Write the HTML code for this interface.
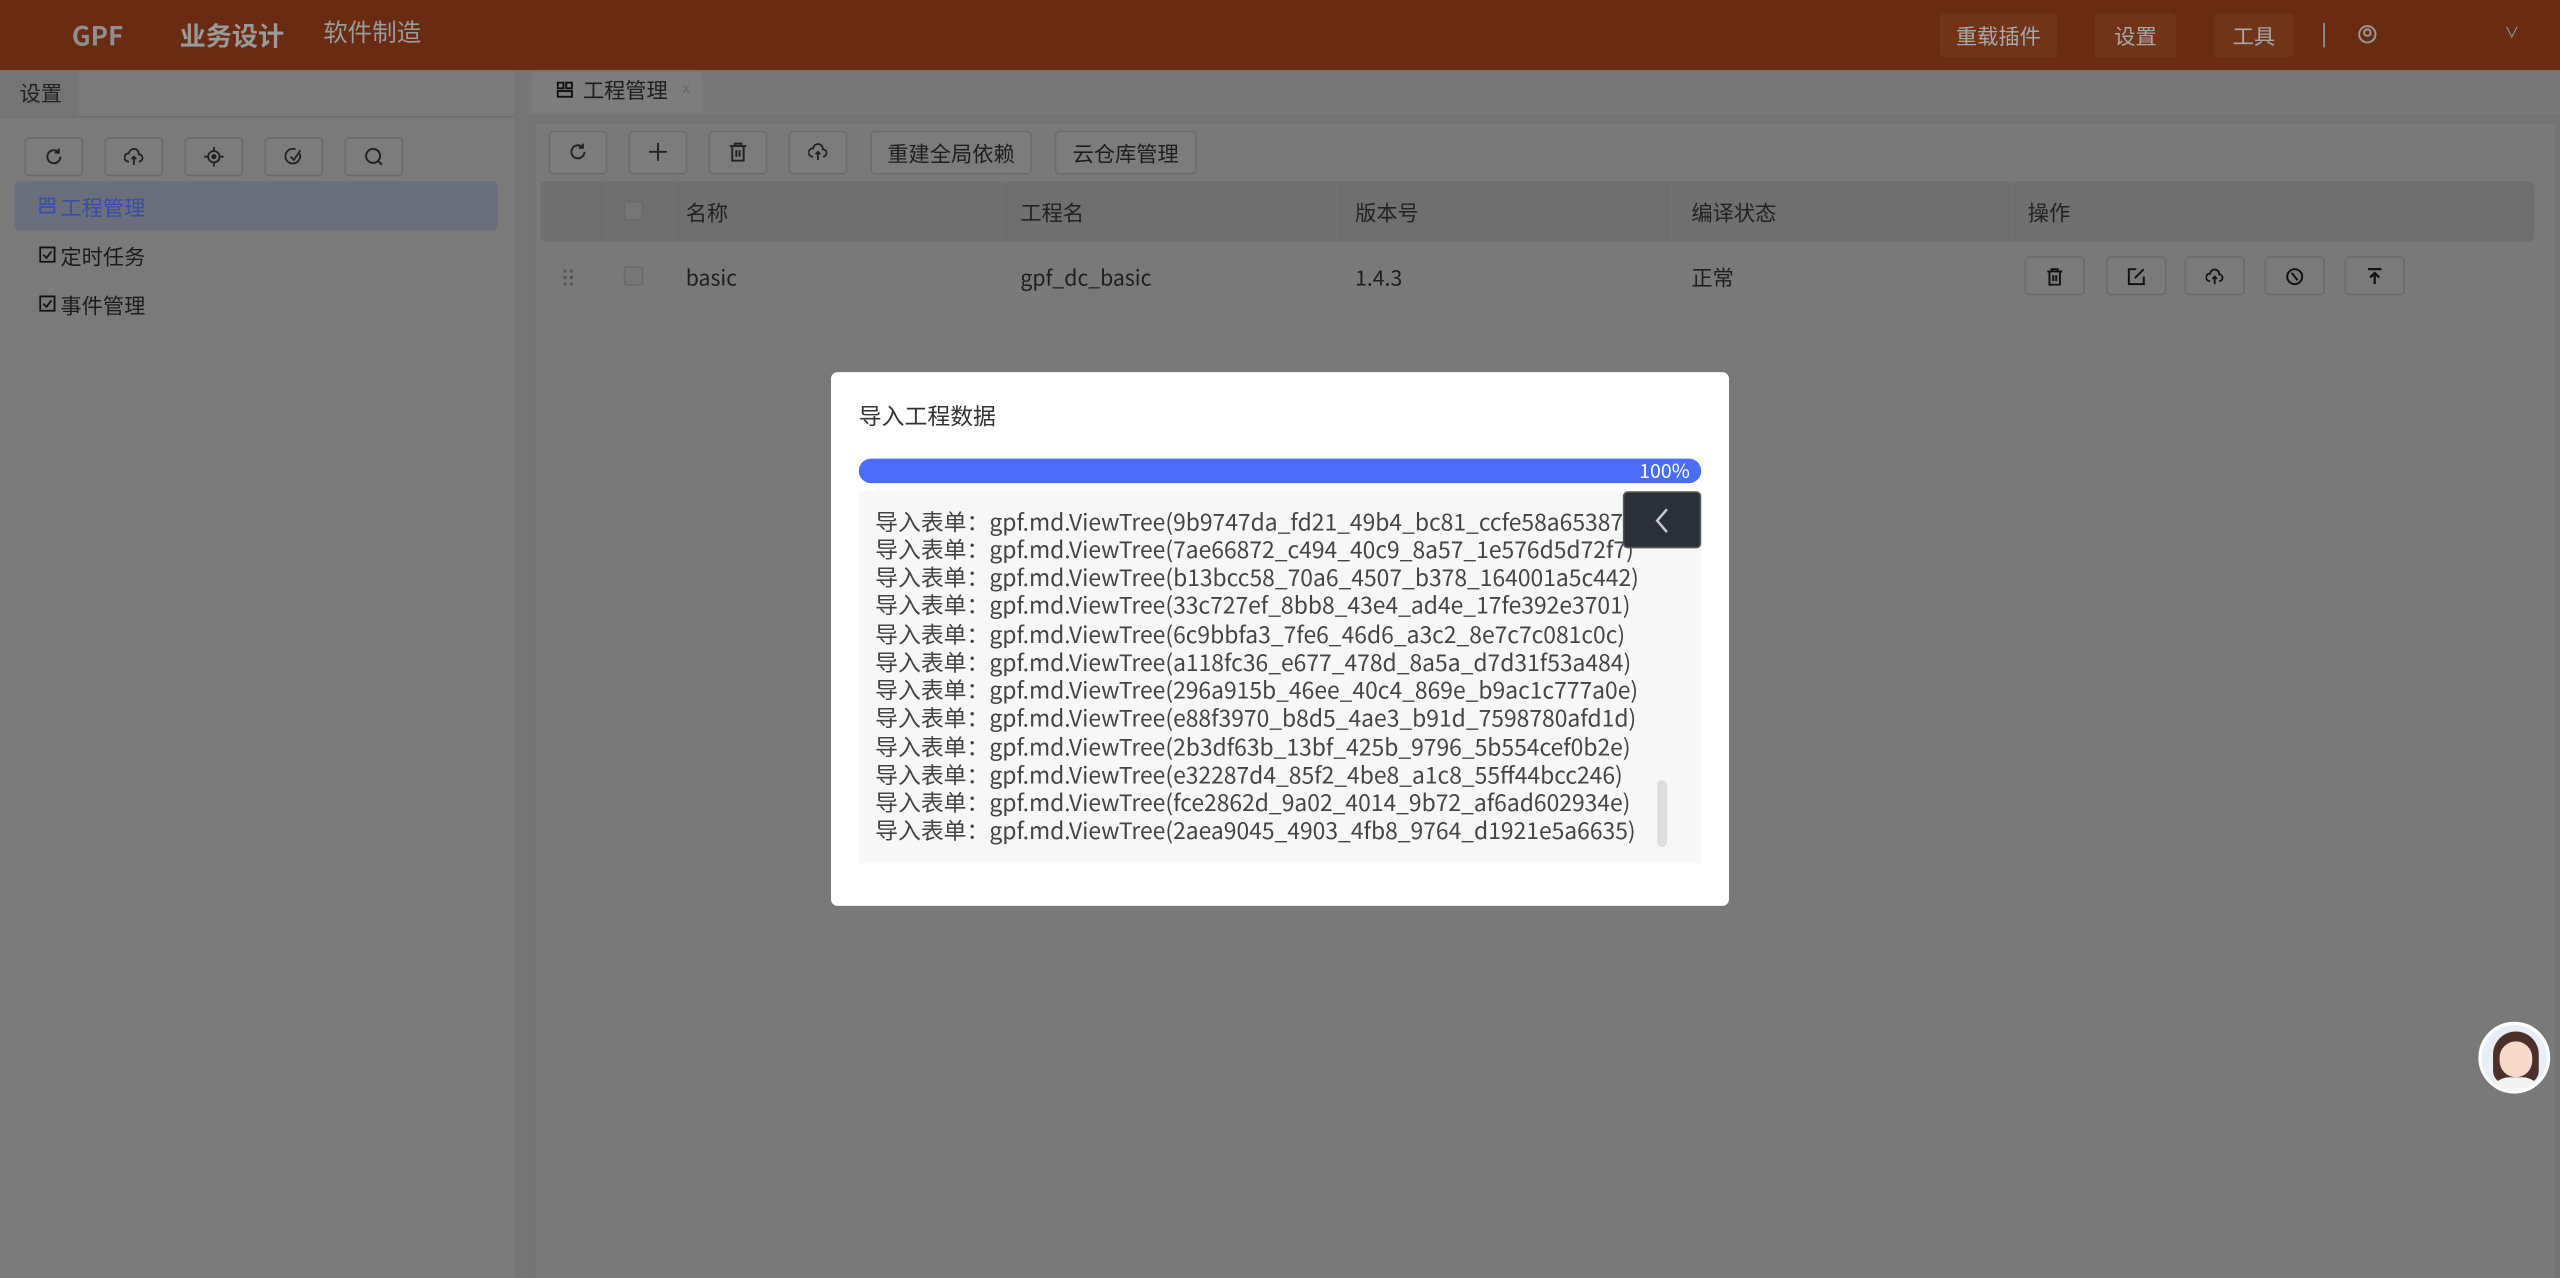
<!DOCTYPE html>
<html><head><meta charset="utf-8"><style>
*{margin:0;padding:0;box-sizing:border-box}
html,body{width:2560px;height:1278px;overflow:hidden;background:#777}
#s{width:1568px;height:783px;transform:scale(1.63265,1.6322);transform-origin:0 0;position:relative;font-family:"Noto Sans CJK SC","Liberation Sans",sans-serif;background:#787878;color:#222}
.a{position:absolute}
.hb{position:absolute;top:8px;height:27px;background:#703419;border-radius:3px;color:#a9a9a9;font-size:13px;line-height:27px;text-align:center}
.ib{position:absolute;top:84px;width:36px;height:24px;border:1px solid #6a6a6a;border-radius:3px;background:#7c7c7c}
.tb{position:absolute;top:80px;height:27px;border:1px solid #6c6c6c;border-radius:3px;background:#7c7c7c;font-size:13px;line-height:25px;text-align:center;color:#1e1e1e}
.ab{position:absolute;top:157px;width:37px;height:24px;border:1px solid #6a6a6a;border-radius:3px;background:#7a7a7a}
.ln{position:absolute;left:536px;font-size:14px;letter-spacing:0;line-height:17px;color:#444;white-space:nowrap;font-family:"Noto Sans CJK SC",sans-serif}
svg{position:absolute}
</style></head><body><div id="s">
<div class="a" style="left:0;top:0;width:1568px;height:43px;background:#692b11"></div>
<div class="a" style="left:44px;top:10px;font-size:16px;font-weight:bold;color:#8f8f8f;line-height:22px">GPF</div>
<div class="a" style="left:110px;top:10px;font-size:16px;font-weight:bold;color:#9a9a9a;line-height:22px">业务设计</div>
<div class="a" style="left:198px;top:9px;font-size:15px;color:#9a9a9a;line-height:22px">软件制造</div>
<div class="hb" style="left:1188px;width:72px">重载插件</div>
<div class="hb" style="left:1283px;width:50px">设置</div>
<div class="hb" style="left:1356px;width:49px">工具</div>
<div class="a" style="left:1423px;top:14px;width:1px;height:15px;background:#999"></div>
<svg style="left:1444px;top:15px" width="12" height="12" viewBox="0 0 12 12" fill="none" stroke="#999" stroke-width="1.2"><circle cx="6" cy="6" r="5"/><circle cx="6" cy="5" r="2"/></svg>
<div class="a" style="left:1534px;top:13px;font-size:9px;color:#999">∨</div>
<div class="a" style="left:0;top:43px;width:315px;height:740px;background:#7a7a7a"></div>
<div class="a" style="left:0;top:43px;width:48px;height:28px;background:#747474;font-size:13px;line-height:28px;padding-left:12px;color:#222">设置</div>
<div class="a" style="left:0;top:71px;width:315px;height:1px;background:#6e6e6e"></div>
<div class="ib" style="left:15px"></div><div class="ib" style="left:64px"></div><div class="ib" style="left:113px"></div><div class="ib" style="left:162px"></div><div class="ib" style="left:211px"></div>
<svg style="left:27px;top:90px" width="12" height="12" viewBox="0 0 12 12" fill="none" stroke="#222" stroke-width="1.2"><path d="M10 6a4 4 0 1 1-1.5-3.1M9 1v2.5H6.5"/></svg>
<svg style="left:76px;top:90px" width="12" height="12" viewBox="0 0 12 12" fill="none" stroke="#222" stroke-width="1.1"><path d="M3 9H2.5a2.5 2.5 0 0 1 .5-5 3 3 0 0 1 6 .5 2 2 0 0 1 0 4.5H9M6 11V6M4.5 7.5 6 6l1.5 1.5"/></svg>
<svg style="left:125px;top:90px" width="12" height="12" viewBox="0 0 12 12" fill="none" stroke="#222" stroke-width="1.1"><circle cx="6" cy="6" r="3.5"/><circle cx="6" cy="6" r="1" fill="#222"/><path d="M6 0v2.5M6 9.5V12M0 6h2.5M9.5 6H12"/></svg>
<svg style="left:174px;top:90px" width="12" height="12" viewBox="0 0 12 12" fill="none" stroke="#222" stroke-width="1.1"><path d="M9.5 4A4.5 4.5 0 1 1 7 1.5M4 6l2 2 4-6"/></svg>
<svg style="left:223px;top:90px" width="12" height="12" viewBox="0 0 12 12" fill="none" stroke="#222" stroke-width="1.2"><circle cx="5.5" cy="5.5" r="4.3"/><path d="M8.5 8.5 11 11"/></svg>
<div class="a" style="left:9px;top:111px;width:296px;height:30px;background:#6b6f7b;border-radius:3px"></div>
<svg style="left:24px;top:121px" width="10" height="10" viewBox="0 0 10 10" fill="none" stroke="#3d4fa8" stroke-width="1.2"><rect x="0.6" y="0.6" width="3.5" height="3.5"/><rect x="5.8" y="0.6" width="3.5" height="3.5"/><rect x="0.6" y="5.8" width="8.7" height="3.5"/></svg>
<div class="a" style="left:37px;top:117px;font-size:13px;color:#3a4ca6">工程管理</div>
<svg style="left:24px;top:151px" width="10" height="10" viewBox="0 0 10 10" fill="none" stroke="#111" stroke-width="1.1"><rect x="0.6" y="0.6" width="8.8" height="8.8"/><path d="M2.5 5l2 2 3-4"/></svg>
<div class="a" style="left:37px;top:147px;font-size:13px;color:#1c1c1c">定时任务</div>
<svg style="left:24px;top:181px" width="10" height="10" viewBox="0 0 10 10" fill="none" stroke="#111" stroke-width="1.1"><rect x="0.6" y="0.6" width="8.8" height="8.8"/><path d="M2.5 5l2 2 3-4"/></svg>
<div class="a" style="left:37px;top:177px;font-size:13px;color:#1c1c1c">事件管理</div>
<div class="a" style="left:315px;top:43px;width:8px;height:740px;background:#747474"></div>
<div class="a" style="left:323px;top:43px;width:1245px;height:27px;background:#777"></div>
<div class="a" style="left:326px;top:44px;width:104px;height:25px;background:#7d7d7d;border-radius:3px 3px 0 0"></div>
<svg style="left:341px;top:50px" width="10" height="10" viewBox="0 0 10 10" fill="none" stroke="#111" stroke-width="1.2"><rect x="0.6" y="0.6" width="3.5" height="3.5"/><rect x="5.8" y="0.6" width="3.5" height="3.5"/><rect x="0.6" y="5.8" width="8.7" height="3.5"/></svg>
<div class="a" style="left:357px;top:45px;font-size:13px;color:#1e1e1e">工程管理</div>
<div class="a" style="left:418px;top:47px;font-size:9px;color:#666">x</div>
<div class="a" style="left:323px;top:70px;width:1245px;height:713px;background:#737373"></div>
<div class="a" style="left:328px;top:76px;width:1237px;height:707px;background:#797979"></div>
<div class="tb" style="left:336px;width:36px"></div><div class="tb" style="left:385px;width:36px"></div><div class="tb" style="left:434px;width:36px"></div><div class="tb" style="left:483px;width:36px"></div>
<svg style="left:348px;top:87px" width="12" height="12" viewBox="0 0 12 12" fill="none" stroke="#222" stroke-width="1.2"><path d="M10 6a4 4 0 1 1-1.5-3.1M9 1v2.5H6.5"/></svg>
<svg style="left:397px;top:87px" width="12" height="12" viewBox="0 0 12 12" fill="none" stroke="#222" stroke-width="1.2"><path d="M6 0.5v11M0.5 6h11"/></svg>
<svg style="left:446px;top:87px" width="12" height="12" viewBox="0 0 12 12" fill="none" stroke="#222" stroke-width="1.2"><path d="M1 2.5h10M4 2.5V1h4v1.5M2.5 2.5v9h7v-9M5 5v4M7 5v4"/></svg>
<svg style="left:495px;top:87px" width="12" height="12" viewBox="0 0 12 12" fill="none" stroke="#222" stroke-width="1.1"><path d="M3 9H2.5a2.5 2.5 0 0 1 .5-5 3 3 0 0 1 6 .5 2 2 0 0 1 0 4.5H9M6 11V6M4.5 7.5 6 6l1.5 1.5"/></svg>
<div class="tb" style="left:533px;width:99px">重建全局依赖</div>
<div class="tb" style="left:646px;width:87px">云仓库管理</div>
<div class="a" style="left:331px;top:111px;width:1221px;height:37px;background:#6f6f6f;border-radius:3px"></div>
<div class="a" style="left:371px;top:111px;width:1px;height:37px;background:#747474"></div>
<div class="a" style="left:412px;top:111px;width:1px;height:37px;background:#747474"></div>
<div class="a" style="left:613px;top:111px;width:1px;height:37px;background:#747474"></div>
<div class="a" style="left:818px;top:111px;width:1px;height:37px;background:#747474"></div>
<div class="a" style="left:1023px;top:111px;width:1px;height:37px;background:#747474"></div>
<div class="a" style="left:1232px;top:111px;width:1px;height:37px;background:#747474"></div>
<div class="a" style="left:382px;top:123px;width:12px;height:12px;border:1px solid #6a6a6a;border-radius:2px;background:#767676"></div>
<div class="a" style="left:420px;top:120px;font-size:13px">名称</div>
<div class="a" style="left:625px;top:120px;font-size:13px">工程名</div>
<div class="a" style="left:830px;top:120px;font-size:13px">版本号</div>
<div class="a" style="left:1036px;top:120px;font-size:13px">编译状态</div>
<div class="a" style="left:1242px;top:120px;font-size:13px">操作</div>
<svg style="left:345px;top:165px" width="6" height="10" viewBox="0 0 6 10" fill="#555"><circle cx="1" cy="1" r="1"/><circle cx="5" cy="1" r="1"/><circle cx="1" cy="5" r="1"/><circle cx="5" cy="5" r="1"/><circle cx="1" cy="9" r="1"/><circle cx="5" cy="9" r="1"/></svg>
<div class="a" style="left:382px;top:163px;width:12px;height:12px;border:1px solid #6a6a6a;border-radius:2px;background:#767676"></div>
<div class="a" style="left:420px;top:160px;font-size:13px;color:#1e1e1e">basic</div>
<div class="a" style="left:625px;top:160px;font-size:13px;color:#1e1e1e">gpf_dc_basic</div>
<div class="a" style="left:830px;top:160px;font-size:13px;color:#1e1e1e">1.4.3</div>
<div class="a" style="left:1036px;top:160px;font-size:13px;color:#1e1e1e">正常</div>
<div class="ab" style="left:1240px"></div><div class="ab" style="left:1290px"></div><div class="ab" style="left:1338px"></div><div class="ab" style="left:1387px"></div><div class="ab" style="left:1436px"></div>
<svg style="left:1253px;top:164px" width="11" height="11" viewBox="0 0 12 12" fill="none" stroke="#111" stroke-width="1.3"><path d="M1 2.5h10M4 2.5V1h4v1.5M2.5 2.5v9h7v-9M5 5v4M7 5v4"/></svg>
<svg style="left:1303px;top:164px" width="11" height="11" viewBox="0 0 12 12" fill="none" stroke="#111" stroke-width="1.3"><path d="M6 1H1v10h10V6M5 7l6-6"/></svg>
<svg style="left:1351px;top:164px" width="11" height="11" viewBox="0 0 12 12" fill="none" stroke="#111" stroke-width="1.2"><path d="M3 9H2.5a2.5 2.5 0 0 1 .5-5 3 3 0 0 1 6 .5 2 2 0 0 1 0 4.5H9M6 11V6M4.5 7.5 6 6l1.5 1.5"/></svg>
<svg style="left:1400px;top:164px" width="11" height="11" viewBox="0 0 12 12" fill="none" stroke="#111" stroke-width="1.3"><circle cx="6" cy="6" r="5"/><path d="M4 3.5l4 5"/></svg>
<svg style="left:1449px;top:164px" width="11" height="11" viewBox="0 0 12 12" fill="none" stroke="#111" stroke-width="1.5"><path d="M1.5 1h9M6 11V3.5M3 6.5l3-3 3 3"/></svg>
<div class="a" style="left:509px;top:228px;width:550px;height:327px;background:#fff;border-radius:4px"></div>
<div class="a" style="left:526px;top:245px;font-size:14px;color:#333">导入工程数据</div>
<div class="a" style="left:526px;top:281px;width:516px;height:15px;background:#4a6cf7;border-radius:8px"></div>
<div class="a" style="left:1004px;top:280px;font-size:12px;line-height:17px;color:#fff">100%</div>
<div class="a" style="left:526px;top:301px;width:516px;height:228px;background:#f7f7f7;overflow:hidden"></div>
<div class="ln" style="top:312px">导入表单：gpf.md.ViewTree(9b9747da_fd21_49b4_bc81_ccfe58a65387)</div>
<div class="ln" style="top:329px">导入表单：gpf.md.ViewTree(7ae66872_c494_40c9_8a57_1e576d5d72f7)</div>
<div class="ln" style="top:346px">导入表单：gpf.md.ViewTree(b13bcc58_70a6_4507_b378_164001a5c442)</div>
<div class="ln" style="top:363px">导入表单：gpf.md.ViewTree(33c727ef_8bb8_43e4_ad4e_17fe392e3701)</div>
<div class="ln" style="top:381px">导入表单：gpf.md.ViewTree(6c9bbfa3_7fe6_46d6_a3c2_8e7c7c081c0c)</div>
<div class="ln" style="top:398px">导入表单：gpf.md.ViewTree(a118fc36_e677_478d_8a5a_d7d31f53a484)</div>
<div class="ln" style="top:415px">导入表单：gpf.md.ViewTree(296a915b_46ee_40c4_869e_b9ac1c777a0e)</div>
<div class="ln" style="top:432px">导入表单：gpf.md.ViewTree(e88f3970_b8d5_4ae3_b91d_7598780afd1d)</div>
<div class="ln" style="top:450px">导入表单：gpf.md.ViewTree(2b3df63b_13bf_425b_9796_5b554cef0b2e)</div>
<div class="ln" style="top:467px">导入表单：gpf.md.ViewTree(e32287d4_85f2_4be8_a1c8_55ff44bcc246)</div>
<div class="ln" style="top:484px">导入表单：gpf.md.ViewTree(fce2862d_9a02_4014_9b72_af6ad602934e)</div>
<div class="ln" style="top:501px">导入表单：gpf.md.ViewTree(2aea9045_4903_4fb8_9764_d1921e5a6635)</div>
<div class="a" style="left:1015px;top:478px;width:6px;height:41px;background:#ddd;border-radius:3px"></div>
<div class="a" style="left:994px;top:301px;width:48px;height:35px;background:#2b2f38;border:1px solid #555;border-radius:3px"></div>
<svg style="left:1013px;top:311px" width="10" height="16" viewBox="0 0 10 16" fill="none" stroke="#ccc" stroke-width="1.5"><path d="M8 1 2 8l6 7"/></svg>
<div class="a" style="left:1518px;top:626px;width:44px;height:44px;border-radius:50%;background:#e8eef5;border:2px solid #fff;overflow:hidden">
<div class="a" style="left:7px;top:4px;width:28px;height:32px;border-radius:14px 14px 8px 8px;background:#4a2f2a"></div>
<div class="a" style="left:11px;top:10px;width:20px;height:22px;border-radius:10px;background:#f6d9c8"></div>
<div class="a" style="left:5px;top:32px;width:32px;height:14px;border-radius:12px 12px 0 0;background:#f3f3f3"></div>
</div>
</div></body></html>
